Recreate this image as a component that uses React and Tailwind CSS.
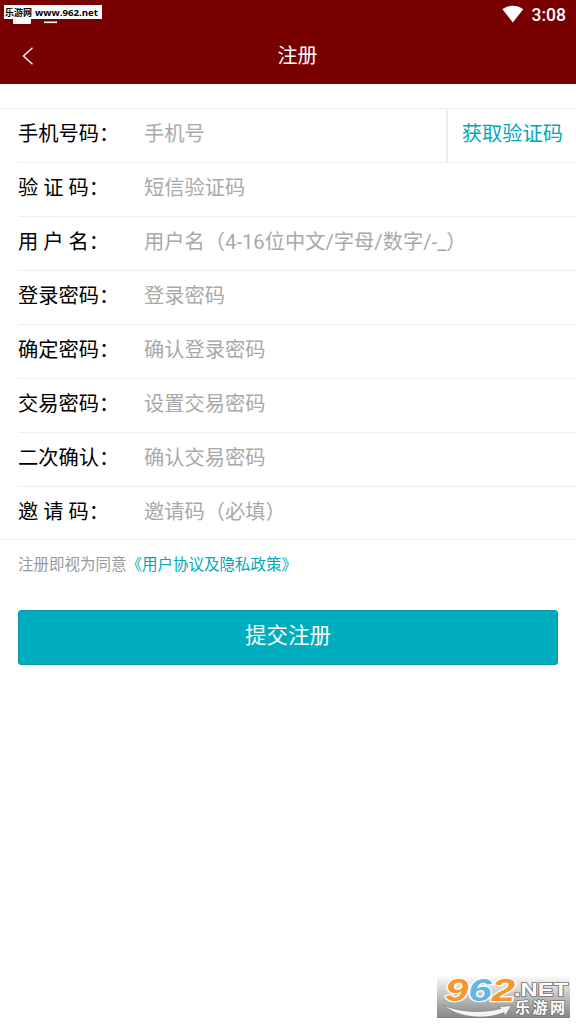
import React, { useState } from 'react';

const fields = [
  { name: 'phone', label: '手机号码：', placeholder: '手机号', type: 'tel' },
  { name: 'code', label: '验 证 码：', placeholder: '短信验证码', type: 'text' },
  { name: 'username', label: '用 户 名：', placeholder: '用户名（4-16位中文/字母/数字/-_）', type: 'text' },
  { name: 'password', label: '登录密码：', placeholder: '登录密码', type: 'password' },
  { name: 'confirmPassword', label: '确定密码：', placeholder: '确认登录密码', type: 'password' },
  { name: 'tradePassword', label: '交易密码：', placeholder: '设置交易密码', type: 'password' },
  { name: 'confirmTrade', label: '二次确认：', placeholder: '确认交易密码', type: 'password' },
  { name: 'invite', label: '邀 请 码：', placeholder: '邀请码（必填）', type: 'text' },
];

const StatusBar = () => (
  <div className="h-7 flex items-start justify-between pl-1 pr-[10px] pt-[5px] text-white">
    {/* Site tag with the lower edge of the notification icons under it */}
    <svg width="98" height="19" viewBox="0 0 98 19">
      <rect x="9" y="8" width="18" height="11" rx="1" fill="white" />
      <rect x="40" y="16.5" width="13" height="1.6" fill="white" />
      <rect width="98" height="14" fill="white" />
      <g fill="black" fontWeight="700">
        <text x="1" y="11.2" fontSize="9" fontFamily="'Noto Sans CJK SC', sans-serif">乐游网</text>
        <text x="31" y="11" fontSize="9.5" textLength="63" lengthAdjust="spacingAndGlyphs" fontFamily="'Open Sans', sans-serif">www.962.net</text>
      </g>
    </svg>
    <div className="flex items-start gap-2">
      <svg width="22" height="18" viewBox="0 0 22 18" fill="white">
        <path d="M0.4 4.2C6.6-0.4 15-0.4 21.2 4.2L10.8 17.4Z" />
      </svg>
      <span className="text-[17.5px] leading-5 font-medium">3:08</span>
    </div>
  </div>
);

const SiteLogo = () => (
  <div className="absolute right-1.5 bottom-1.5 w-[133px] h-[43px] bg-gradient-to-b from-white to-[#858585]">
    <svg width="133" height="43" viewBox="0 0 133 43">
      <path d="M6 30C20 36.5 44 39 64 33.5L61 32L74.5 30.5L68 41L67 37.5C46 46 20 42 6 30Z" fill="#f4f4f4" stroke="#777" strokeWidth="0.6" />
      <text
        x="8"
        y="26"
        fontFamily="'Liberation Sans', sans-serif"
        fontWeight="700"
        fontStyle="italic"
        fontSize="32"
        textLength="70"
        lengthAdjust="spacingAndGlyphs"
        stroke="white"
        strokeWidth="2.5"
        paintOrder="stroke"
        strokeLinejoin="round"
      >
        <tspan fill="#f7972b">9</tspan>
        <tspan fill="#62b5e5">6</tspan>
        <tspan fill="#f7972b">2</tspan>
      </text>
      <g fill="white" stroke="#777" strokeWidth="1.6" paintOrder="stroke" fontWeight="700">
        <text x="77" y="21" fontSize="18" textLength="54" lengthAdjust="spacingAndGlyphs" fontFamily="'Liberation Sans', sans-serif">.NET</text>
        <text x="78" y="38" fontSize="15" textLength="50" fontFamily="'Noto Sans CJK SC', sans-serif">乐游网</text>
      </g>
    </svg>
  </div>
);

const App = () => {
  const [values, setValues] = useState({});

  const handleChange = (e) => {
    setValues({ ...values, [e.target.name]: e.target.value });
  };

  return (
    <div className="relative w-full h-screen overflow-hidden bg-white font-[Roboto,'Noto_Sans_CJK_SC',sans-serif] text-[20.25px]">
      <header className="h-[84px] bg-[#780000] text-white">
        <StatusBar />
        <div className="flex h-14 items-center pl-[22px] pr-[3px]">
          <button className="flex-1" aria-label="返回">
            <svg width="12" height="18" viewBox="0 0 12 18" fill="none" stroke="white" strokeWidth="1.4">
              <path d="M10.5 0.8L1.5 9L10.5 17.2" />
            </svg>
          </button>
          <h1 className="text-[20px] leading-7">注册</h1>
          <span className="flex-1" />
        </div>
      </header>

      <form onSubmit={(e) => e.preventDefault()}>
        <div className="mt-6 border-y border-[#ededed] pl-[18px]">
          {fields.map((field, i) => (
            <div
              key={field.name}
              className={i < fields.length - 1 ? 'flex h-[54px] border-b border-[#ededed]' : 'flex h-[52px]'}
            >
              <label className="w-[126px] shrink-0 pt-[10px] leading-[30px] text-black whitespace-nowrap">
                {field.label}
              </label>
              <input
                name={field.name}
                type={field.type}
                placeholder={field.placeholder}
                value={values[field.name] || ''}
                onChange={handleChange}
                className="min-w-0 flex-1 h-[30px] mt-[10px] leading-[30px] outline-none placeholder:text-[#a9a9a9]"
              />
              {field.name === 'phone' && (
                <button type="button" className="w-[130px] shrink-0 border-l-2 border-[#ededed] pl-px pb-[3px] text-[#00a9b8]">
                  获取验证码
                </button>
              )}
            </div>
          ))}
        </div>

        <p className="pl-[18px] pt-[13px] text-[15.5px] leading-6 text-[#999]">
          注册即视为同意<a href="#" className="text-[#00a9b8]">《用户协议及隐私政策》</a>
        </p>

        <div className="px-[18px] pt-[33px]">
          <button
            type="submit"
            className="w-full h-[55px] pb-[3px] rounded-[3px] border border-[#0799a7] bg-[#00adbe] text-[21.5px] text-white"
          >
            提交注册
          </button>
        </div>
      </form>

      <SiteLogo />
    </div>
  );
};

export default App;
